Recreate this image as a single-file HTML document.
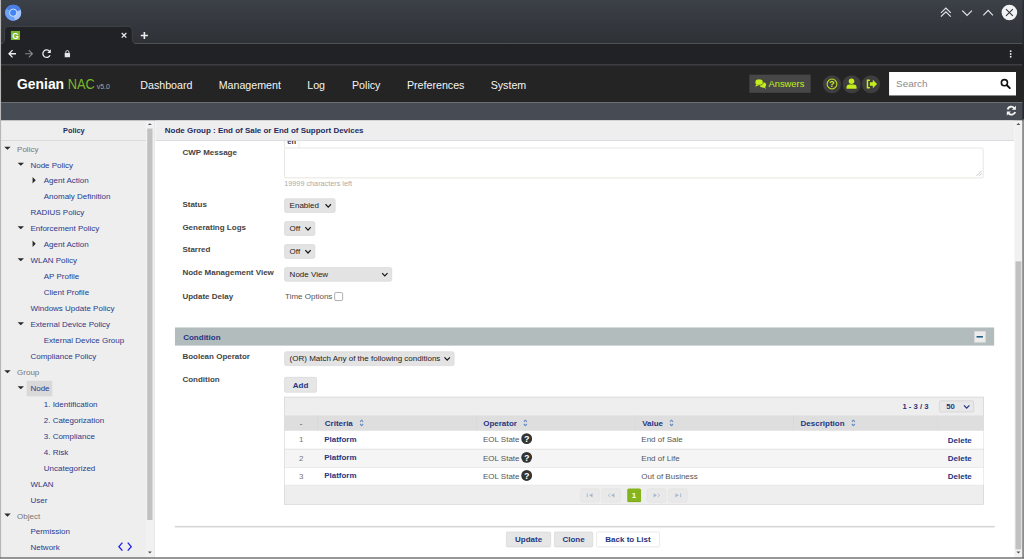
<!DOCTYPE html>
<html>
<head>
<meta charset="utf-8">
<title>Genian NAC</title>
<style>
html,body{margin:0;padding:0;width:1024px;height:559px;overflow:hidden;background:#fff;}
*{box-sizing:border-box;}
#root{position:absolute;left:0;top:0;width:1920px;height:1048px;transform:scale(0.533333);transform-origin:0 0;
  font-family:"Liberation Sans",sans-serif;font-size:15px;color:#444;overflow:hidden;background:#fff;}
.abs{position:absolute;}
/* ---------- browser chrome ---------- */
#titlebar{left:0;top:0;width:1920px;height:81px;background:linear-gradient(#3c4047 0px,#35393f 40px,#2e3136 81px);}
#tab{left:8px;top:50px;width:240px;height:31px;background:#202225;border-radius:9px 9px 0 0;border:1px solid #4a4d52;border-bottom:none;}
#tabline{left:0;top:80px;width:1920px;height:1px;background:#45484d;}
#toolbar{left:0;top:82px;width:1920px;height:39px;background:#202225;}
#toolline{left:0;top:120px;width:1920px;height:2px;background:#3b3e42;}
/* ---------- app header ---------- */
#apphead{left:0;top:122px;width:1920px;height:69.5px;background:#242424;}
#band{left:0;top:191.5px;width:1920px;height:34.5px;background:#474b53;}
.nav{top:145.8px;font-size:20px;color:#f4f4f4;line-height:28px;white-space:nowrap;}
.circ{width:34px;height:34px;border-radius:50%;background:#3e3e3e;top:140.5px;}
/* ---------- sidebar ---------- */
#side{left:2px;top:226px;width:272px;height:820px;background:#eeeeee;overflow:hidden;}
#sidehead{left:0;top:0;width:272px;height:38px;border-bottom:1px solid #c8c8c8;text-align:center;font-weight:bold;color:#1f2c60;line-height:39.5px;font-size:13.8px;padding-left:1px;}
.tr{position:absolute;left:0;height:30px;line-height:30px;font-size:15px;white-space:nowrap;color:#2b3a8a;}
.tr.g{color:#777;}
.ar{position:absolute;width:0;height:0;}
.ard{border-left:6.4px solid transparent;border-right:6.4px solid transparent;border-top:6.5px solid #2a2a2a;margin-left:-0.9px;margin-top:0.3px;}
.arr{border-top:6.2px solid transparent;border-bottom:6.2px solid transparent;border-left:6.8px solid #2a2a2a;margin-top:-0.2px;}
#sscroll{left:274px;top:226px;width:14px;height:820px;background:#f1f1f1;}
#sthumb{left:276px;top:241px;width:10px;height:734px;background:#c1c1c1;}
#split{left:288px;top:226px;width:3px;height:820px;background:#e6e8ec;}
/* ---------- main ---------- */
#main{left:291px;top:226px;width:1611px;height:820px;background:#fff;overflow:hidden;}
#mainhead{left:0;top:0;width:1611px;height:37.6px;background:#eeeeee;border-bottom:1px solid #c5cad2;font-weight:bold;color:#1f2c60;line-height:38px;padding-left:18px;font-size:14.95px;white-space:nowrap;}
#mscroll{left:1902px;top:226px;width:15px;height:820px;background:#f1f1f1;}
#mthumb{left:1904px;top:490px;width:11px;height:540px;background:#c1c1c1;}
.lbl{position:absolute;left:51px;font-weight:bold;font-size:15px;color:#444;line-height:20px;white-space:nowrap;}
.sel{position:absolute;left:242px;height:27px;background:#e3e3e3;border:1px solid #d2d2d2;border-radius:4px;font-size:15px;color:#222;line-height:24.5px;padding-left:9px;white-space:nowrap;}
.sel svg{position:absolute;right:6px;top:7.5px;}
.btn{position:absolute;height:29px;background:#e6e6e6;border:1px solid #cfcfcf;border-radius:3px;font-weight:bold;font-size:15px;color:#233683;line-height:27px;text-align:center;white-space:nowrap;}
/* table */
#tbl{left:242px;top:518.5px;width:1312px;height:202.5px;background:#eeeeee;border:1px solid #cccccc;}
.th{position:absolute;top:34px;height:29.5px;background:#dedede;border-right:1px solid #cfcfcf;font-weight:bold;color:#233683;font-size:15px;line-height:28px;padding-left:13px;white-space:nowrap;}
.row{position:absolute;left:0;width:1310px;height:34px;border-top:1px solid #dcdcdc;font-size:15px;line-height:33px;}
.row span{position:absolute;white-space:nowrap;top:-1px;}
.row span.dl{top:0;}
.b{font-weight:bold;color:#233683;}
.pg{position:absolute;top:171.3px;height:26px;width:36px;background:#e9e9e9;border:1px solid #e0e0e0;border-radius:4px;}
/* window borders */
#bl{left:0;top:0px;width:2px;height:1048px;background:linear-gradient(90deg,#cfcfcf,#9a9a9a);}
#br{left:1917px;top:224px;width:3px;height:824px;background:linear-gradient(90deg,#5f5f5f,#a0a0a0);}
#bb{left:0;top:1045px;width:1920px;height:3px;background:linear-gradient(#5f5f5f,#a0a0a0);}
</style>
</head>
<body>
<div id="root">

<!-- ================= BROWSER CHROME ================= -->
<div id="titlebar" class="abs"></div>
<div id="toolbar" class="abs"></div>
<div id="toolline" class="abs"></div>
<svg class="abs" style="left:0;top:40px" width="1920" height="50" viewBox="0 40 1920 50"><path d="M-4 81.6 L1 81.6 Q8.5 81.6 8.5 73.5 L8.5 58 Q8.5 49.6 17 49.6 L239.5 49.6 Q248 49.6 248 58 L248 73.5 Q248 81.6 255.5 81.6 L1924 81.6 L1924 96 L-4 96 L-4 81.6 Z" fill="#202225" stroke="#484b50" stroke-width="1.3"/></svg>
<svg class="abs" style="left:0;top:0" width="1920" height="122" viewBox="0 0 1920 122">
<!-- chromium logo -->
<g transform="translate(24.8 23.8)">
<circle r="15" fill="#6ea2f6"/>
<path d="M0 0 L-13 -7.5 A15 15 0 0 1 14.1 -5.1 Z" fill="#4a7ee6"/>
<path d="M0 0 L14.1 -5.1 A15 15 0 0 1 2.6 14.8 Z" fill="#a9c7fb"/>
<path d="M0 0 L2.6 14.8 A15 15 0 0 1 -13 -7.5 Z" fill="#6ea2f6"/>
<circle r="6.9" fill="#4086f4" stroke="#eef4ff" stroke-width="1.5"/>
</g>
<!-- window buttons -->
<g fill="none" stroke="#e4e6e8" stroke-width="2.1" stroke-linecap="square">
<path d="M1765 23.5 L1773.5 15 L1782 23.5"/>
<path d="M1765 30.5 L1773.5 22 L1782 30.5"/>
<path d="M1805 20.5 L1813.3 29 L1821.6 20.5"/>
<path d="M1844.5 28 L1852.8 19.5 L1861 28"/>
</g>
<circle cx="1892.6" cy="23.4" r="14.6" fill="#f1f2f3"/>
<path d="M1886.2 17 L1899 29.8 M1899 17 L1886.2 29.8" stroke="#33363b" stroke-width="2.1" fill="none"/>
<!-- favicon -->
<rect x="20.5" y="58" width="17" height="17" fill="#78b82c"/>
<text x="29" y="72.3" font-family="Liberation Sans, sans-serif" font-weight="bold" font-size="15.5" fill="#fff" text-anchor="middle">G</text>
<!-- tab close, plus -->
<path d="M228.3 61.9 L236.9 70.5 M236.9 61.9 L228.3 70.5" stroke="#e8eaed" stroke-width="2.5" fill="none"/>
<path d="M264 66.5 H277.4 M270.7 59.8 V73.2" stroke="#eceef0" stroke-width="3" fill="none"/>
<!-- back -->
<path d="M30 100.8 H17.5 M23.5 94 L16.8 100.8 L23.5 107.6" stroke="#eceef0" stroke-width="2.4" fill="none"/>
<!-- forward -->
<path d="M47 100.8 H60 M54 94 L60.8 100.8 L54 107.6" stroke="#84878b" stroke-width="2.2" fill="none"/>
<!-- reload -->
<path d="M93 96.5 A7 7 0 1 0 93.8 103.5" stroke="#eceef0" stroke-width="2.4" fill="none"/>
<path d="M95.3 92.5 V99.2 H88.6 Z" fill="#eceef0"/>
<!-- lock -->
<rect x="121.3" y="99.4" width="10" height="7.8" rx="1" fill="#e4e6e8"/>
<path d="M123.4 99.6 V97.6 A2.9 2.9 0 0 1 129.2 97.6 V99.6" stroke="#e4e6e8" stroke-width="1.7" fill="none"/>
<!-- menu -->
<circle cx="1895" cy="96" r="1.7" fill="#eceef0"/><circle cx="1895" cy="101.2" r="1.7" fill="#eceef0"/><circle cx="1895" cy="106.4" r="1.7" fill="#eceef0"/>
</svg>

<!-- ================= APP HEADER ================= -->
<div id="apphead" class="abs"></div>
<div id="band" class="abs"></div>
<div class="abs" style="left:32px;top:137px;font-size:26px;font-weight:bold;color:#fff;line-height:40px;white-space:nowrap;">Genian</div>
<div class="abs" style="left:127px;top:137px;font-size:27px;color:#7ab82a;line-height:40px;white-space:nowrap;transform:scaleX(0.89);transform-origin:0 0;">NAC</div>
<div class="abs" style="left:181.5px;top:147px;font-size:13px;color:#a8a8a8;line-height:30px;white-space:nowrap;">v5.0</div>
<div class="abs nav" style="left:263px;">Dashboard</div>
<div class="abs nav" style="left:410px;">Management</div>
<div class="abs nav" style="left:576px;">Log</div>
<div class="abs nav" style="left:660px;">Policy</div>
<div class="abs nav" style="left:763px;">Preferences</div>
<div class="abs nav" style="left:920px;">System</div>
<div class="abs" style="left:1405px;top:140px;width:115px;height:34px;background:#474747;"></div>
<div class="abs" style="left:1441px;top:140px;font-size:17.5px;color:#c4ef1c;line-height:34px;white-space:nowrap;">Answers</div>
<div class="abs circ" style="left:1543px;"></div>
<div class="abs circ" style="left:1579.6px;"></div>
<div class="abs circ" style="left:1616.3px;"></div>
<div class="abs" style="left:1667px;top:135px;width:238px;height:44px;background:#fff;"></div>
<div class="abs" style="left:1680px;top:136px;font-size:18.7px;color:#8a8a8a;line-height:44px;">Search</div>
<svg class="abs" style="left:1400px;top:122px" width="520" height="102" viewBox="1400 122 520 102">
<!-- comments icon -->
<g fill="#c4ef1c">
<ellipse cx="1430.3" cy="159" rx="6.2" ry="4.9"/>
<path d="M1433.5 162 L1436.8 166.2 L1430 163.6 Z"/>
<ellipse cx="1423.3" cy="154" rx="7.6" ry="5.9" stroke="#474747" stroke-width="1.3"/>
<path d="M1418.2 157.4 L1416.2 162.6 L1423 159.4 Z"/>
</g>
<!-- help -->
<circle cx="1560" cy="157.5" r="9.2" fill="none" stroke="#c4ef1c" stroke-width="1.9"/>
<text x="1560" y="163.4" font-family="Liberation Sans, sans-serif" font-weight="bold" font-size="16.5" fill="#c4ef1c" text-anchor="middle">?</text>
<!-- user -->
<circle cx="1596.6" cy="152.3" r="5.2" fill="#c4ef1c"/>
<path d="M1587.3 166.5 V163.5 A5 5 0 0 1 1592.3 158.5 H1601 A5 5 0 0 1 1606 163.5 V166.5 Z" fill="#c4ef1c"/>
<!-- sign out -->
<path d="M1631 150.5 H1626.5 V164.5 H1631" fill="none" stroke="#c4ef1c" stroke-width="2.8"/>
<path d="M1631 154.3 H1636.5 V149.5 L1644.5 157.5 L1636.5 165.5 V160.7 H1631 Z" fill="#c4ef1c"/>
<!-- magnifier -->
<circle cx="1883.3" cy="155" r="5.7" fill="none" stroke="#111" stroke-width="3"/>
<path d="M1888 159.8 L1893.4 165.2" stroke="#111" stroke-width="3.6" stroke-linecap="round"/>
<!-- refresh -->
<g fill="none" stroke="#f6f6f6" stroke-width="3.5">
<path d="M1889.2 205.2 A7.2 7.2 0 0 1 1901.6 202.6"/>
<path d="M1903.4 209.8 A7.2 7.2 0 0 1 1891 212.4"/>
</g>
<path d="M1904.8 198.4 V206 H1897.2 Z" fill="#f6f6f6"/>
<path d="M1887.8 216.6 V209 H1895.4 Z" fill="#f6f6f6"/>
</svg>

<!-- ================= SIDEBAR ================= -->
<div id="side" class="abs">
<div id="sidehead" class="abs">Policy</div>
<div class="tr g" style="left:30px;top:38.6px;">Policy</div>
<div class="ar ard" style="left:6.5px;top:48.60px;"></div>
<div class="tr" style="left:55px;top:68.51px;">Node Policy</div>
<div class="ar ard" style="left:31.5px;top:78.51px;"></div>
<div class="tr" style="left:80px;top:98.42px;">Agent Action</div>
<div class="ar arr" style="left:58.5px;top:105.92px;"></div>
<div class="tr" style="left:80px;top:128.33px;">Anomaly Definition</div>
<div class="tr" style="left:55px;top:158.24px;">RADIUS Policy</div>
<div class="tr" style="left:55px;top:188.15px;">Enforcement Policy</div>
<div class="ar ard" style="left:31.5px;top:198.15px;"></div>
<div class="tr" style="left:80px;top:218.06px;">Agent Action</div>
<div class="ar arr" style="left:58.5px;top:225.56px;"></div>
<div class="tr" style="left:55px;top:247.97px;">WLAN Policy</div>
<div class="ar ard" style="left:31.5px;top:257.97px;"></div>
<div class="tr" style="left:80px;top:277.88px;">AP Profile</div>
<div class="tr" style="left:80px;top:307.79px;">Client Profile</div>
<div class="tr" style="left:55px;top:337.7px;">Windows Update Policy</div>
<div class="tr" style="left:55px;top:367.61px;">External Device Policy</div>
<div class="ar ard" style="left:31.5px;top:377.61px;"></div>
<div class="tr" style="left:80px;top:397.52px;">External Device Group</div>
<div class="tr" style="left:55px;top:427.43px;">Compliance Policy</div>
<div class="tr g" style="left:30px;top:457.34px;">Group</div>
<div class="ar ard" style="left:6.5px;top:467.34px;"></div>
<div class="abs" style="left:48px;top:487.55px;width:48px;height:29px;background:#d9d9d9;"></div>
<div class="tr" style="left:55px;top:487.25px;">Node</div>
<div class="ar ard" style="left:31.5px;top:497.25px;"></div>
<div class="tr" style="left:80px;top:517.16px;">1. Identification</div>
<div class="tr" style="left:80px;top:547.07px;">2. Categorization</div>
<div class="tr" style="left:80px;top:576.98px;">3. Compliance</div>
<div class="tr" style="left:80px;top:606.89px;">4. Risk</div>
<div class="tr" style="left:80px;top:636.8px;">Uncategorized</div>
<div class="tr" style="left:55px;top:666.71px;">WLAN</div>
<div class="tr" style="left:55px;top:696.62px;">User</div>
<div class="tr g" style="left:30px;top:726.53px;">Object</div>
<div class="ar ard" style="left:6.5px;top:736.53px;"></div>
<div class="tr" style="left:55px;top:756.44px;">Permission</div>
<div class="tr" style="left:55px;top:786.35px;">Network</div>
<svg class="abs" style="left:218px;top:789.35px" width="32" height="20" viewBox="0 0 32 20"><path d="M9.5 2.5 L3 10 L9.5 17.5 M19.5 2.5 L26 10 L19.5 17.5" fill="none" stroke="#2222ee" stroke-width="2.6"/></svg>
</div>
<div id="sscroll" class="abs"></div>
<div id="sthumb" class="abs"></div>
<div id="split" class="abs"></div>

<!-- ================= MAIN ================= -->
<div id="main" class="abs">
<div id="form" class="abs" style="left:0;top:-1px;width:1611px;height:822px;">
<div class="abs" style="left:242px;top:26px;width:28px;height:26px;border:1px solid #d9d5cc;border-bottom:none;background:#fff;font-weight:bold;font-size:14px;color:#333;text-align:center;line-height:27.5px;">en</div>
<div class="abs" style="left:242px;top:51.5px;width:1311px;height:57px;border:1px solid #d4d0c8;border-radius:3px;background:#fff;"></div>
<svg class="abs" style="left:1539px;top:94px" width="12" height="12" viewBox="0 0 12 12"><path d="M11 1 L1 11 M11 6 L6 11" stroke="#999" stroke-width="1"/></svg>
<div class="lbl" style="top:50px;">CWP Message</div>
<div class="abs" style="left:242px;top:110px;font-size:13.6px;color:#aaa;line-height:20px;white-space:nowrap;">19999 characters left</div>
<div class="lbl" style="top:148.3px;">Status</div>
<div class="sel" style="top:147px;width:96px;">Enabled<svg width="13" height="10" viewBox="0 0 13 10"><path d="M1.4 2 L6.5 7.4 L11.6 2" fill="none" stroke="#1a1a1a" stroke-width="2.3"/></svg></div>
<div class="lbl" style="top:190.5px;">Generating Logs</div>
<div class="sel" style="top:190.4px;width:58px;">Off<svg width="13" height="10" viewBox="0 0 13 10"><path d="M1.4 2 L6.5 7.4 L11.6 2" fill="none" stroke="#1a1a1a" stroke-width="2.3"/></svg></div>
<div class="lbl" style="top:232.7px;">Starred</div>
<div class="sel" style="top:233.4px;width:58px;">Off<svg width="13" height="10" viewBox="0 0 13 10"><path d="M1.4 2 L6.5 7.4 L11.6 2" fill="none" stroke="#1a1a1a" stroke-width="2.3"/></svg></div>
<div class="lbl" style="top:276px;">Node Management View</div>
<div class="sel" style="top:276.2px;width:202px;">Node View<svg width="13" height="10" viewBox="0 0 13 10"><path d="M1.4 2 L6.5 7.4 L11.6 2" fill="none" stroke="#1a1a1a" stroke-width="2.3"/></svg></div>
<div class="lbl" style="top:320px;">Update Delay</div>
<div class="abs" style="left:243.5px;top:320px;font-size:15px;color:#555;line-height:20px;white-space:nowrap;">Time Options</div>
<div class="abs" style="left:336px;top:323px;width:16px;height:16px;border:1.4px solid #6a6a6a;border-radius:3px;background:#fff;"></div>
<div class="abs" style="left:37px;top:389px;width:1536px;height:33.5px;background:#b3bcbc;"></div>
<div class="abs" style="left:52.5px;top:390.5px;font-weight:bold;font-size:15px;color:#233683;line-height:34px;">Condition</div>
<div class="abs" style="left:1535.5px;top:395.5px;width:21px;height:21px;background:#ececec;border:1px solid #d8d8d8;"></div>
<div class="abs" style="left:1540px;top:404.5px;width:12px;height:3px;background:#1f5f80;"></div>
<div class="lbl" style="top:433.5px;">Boolean Operator</div>
<div class="sel" style="top:434px;width:319px;">(OR) Match Any of the following conditions<svg width="13" height="10" viewBox="0 0 13 10"><path d="M1.4 2 L6.5 7.4 L11.6 2" fill="none" stroke="#1a1a1a" stroke-width="2.3"/></svg></div>
<div class="lbl" style="top:477px;">Condition</div>
<div class="btn" style="left:242px;top:482px;width:61px;">Add</div>
<div id="tbl" class="abs"><div class="abs b" style="left:1158px;top:6.5px;font-size:14.5px;line-height:22px;white-space:nowrap;">1 - 3 / 3</div>
<div class="abs b" style="left:1227px;top:6.5px;width:65px;height:22px;background:#e8e8e8;border:1px solid #c8c8c8;border-radius:3px;font-size:14.5px;line-height:19px;padding-left:12px;">50<svg style="position:absolute;right:6.5px;top:5.5px" width="13" height="10" viewBox="0 0 13 10"><path d="M1.4 2 L6.5 7.4 L11.6 2" fill="none" stroke="#233683" stroke-width="2.3"/></svg></div>
<div class="th" style="left:0px;width:62px;padding-left:0;text-align:center;font-weight:normal;color:#445;">-</div>
<div class="th" style="left:62px;width:298px;">Criteria<svg style="margin-left:12px;vertical-align:-2px" width="8" height="14" viewBox="0 0 8 14"><path d="M1 5 L4 1.8 L7 5 M1 9 L4 12.2 L7 9" fill="none" stroke="#6a8cc4" stroke-width="2.1"/></svg></div>
<div class="th" style="left:360px;width:298.5px;padding-left:12px;">Operator<svg style="margin-left:12px;vertical-align:-2px" width="8" height="14" viewBox="0 0 8 14"><path d="M1 5 L4 1.8 L7 5 M1 9 L4 12.2 L7 9" fill="none" stroke="#6a8cc4" stroke-width="2.1"/></svg></div>
<div class="th" style="left:658.5px;width:296.5px;padding-left:11.5px;">Value<svg style="margin-left:12px;vertical-align:-2px" width="8" height="14" viewBox="0 0 8 14"><path d="M1 5 L4 1.8 L7 5 M1 9 L4 12.2 L7 9" fill="none" stroke="#6a8cc4" stroke-width="2.1"/></svg></div>
<div class="th" style="left:955px;width:268.5px;padding-left:12px;">Description<svg style="margin-left:12px;vertical-align:-2px" width="8" height="14" viewBox="0 0 8 14"><path d="M1 5 L4 1.8 L7 5 M1 9 L4 12.2 L7 9" fill="none" stroke="#6a8cc4" stroke-width="2.1"/></svg></div>
<div class="th" style="left:1223.5px;width:86.5px;border-right:none;"></div>
<div class="row" style="top:62.5px;background:#fff;"><span style="left:0;width:62px;text-align:center;color:#777;">1</span><span class="b" style="left:74px;font-size:14.9px;">Platform</span><span style="left:371.5px;color:#555;">EOL State</span><svg style="position:absolute;left:443px;top:4.2px" width="21" height="21" viewBox="-0.5 -0.5 21 21"><circle cx="10" cy="10" r="10.2" fill="#333"/><text x="10" y="16" font-family="Liberation Sans, sans-serif" font-weight="bold" font-size="17" fill="#fff" text-anchor="middle">?</text></svg><span style="left:668.5px;color:#555;">End of Sale</span><span class="b dl" style="left:1243px;">Delete</span></div>
<div class="row" style="top:97.3px;background:#f5f5f5;"><span style="left:0;width:62px;text-align:center;color:#777;">2</span><span class="b" style="left:74px;font-size:14.9px;">Platform</span><span style="left:371.5px;color:#555;">EOL State</span><svg style="position:absolute;left:443px;top:4.2px" width="21" height="21" viewBox="-0.5 -0.5 21 21"><circle cx="10" cy="10" r="10.2" fill="#333"/><text x="10" y="16" font-family="Liberation Sans, sans-serif" font-weight="bold" font-size="17" fill="#fff" text-anchor="middle">?</text></svg><span style="left:668.5px;color:#555;">End of Life</span><span class="b dl" style="left:1243px;">Delete</span></div>
<div class="row" style="top:131.3px;background:#fff;"><span style="left:0;width:62px;text-align:center;color:#777;">3</span><span class="b" style="left:74px;font-size:14.9px;">Platform</span><span style="left:371.5px;color:#555;">EOL State</span><svg style="position:absolute;left:443px;top:4.2px" width="21" height="21" viewBox="-0.5 -0.5 21 21"><circle cx="10" cy="10" r="10.2" fill="#333"/><text x="10" y="16" font-family="Liberation Sans, sans-serif" font-weight="bold" font-size="17" fill="#fff" text-anchor="middle">?</text></svg><span style="left:668.5px;color:#555;">Out of Business</span><span class="b dl" style="left:1243px;">Delete</span></div>
<div class="abs" style="left:0;top:164.5px;width:1310px;height:1px;background:#dcdcdc;"></div>
<div class="pg" style="left:554px;"><svg width="36" height="25" viewBox="0 0 36 25" style="position:absolute;left:-1px;top:-1px"><rect x="12.3" y="9.3" width="1.8" height="7" fill="#a4b8cd"/><path d="M23 9 V16.6 L16.8 12.8 Z" fill="#a4b8cd"/></svg></div>
<div class="pg" style="left:593.8px;"><svg width="36" height="25" viewBox="0 0 36 25" style="position:absolute;left:-1px;top:-1px"><path d="M16.2 9.6 L12.6 12.8 L16.2 16" fill="none" stroke="#a4b8cd" stroke-width="1.5"/><path d="M24 9 V16.6 L17.8 12.8 Z" fill="#a4b8cd"/></svg></div>
<div class="pg" style="left:679px;"><svg width="36" height="25" viewBox="0 0 36 25" style="position:absolute;left:-1px;top:-1px"><path d="M12.4 9 V16.6 L18.6 12.8 Z" fill="#a4b8cd"/><path d="M20.2 9.6 L23.8 12.8 L20.2 16" fill="none" stroke="#a4b8cd" stroke-width="1.5"/></svg></div>
<div class="pg" style="left:719.4px;"><svg width="36" height="25" viewBox="0 0 36 25" style="position:absolute;left:-1px;top:-1px"><path d="M13.4 9 V16.6 L19.6 12.8 Z" fill="#a4b8cd"/><rect x="22.3" y="9.3" width="1.8" height="7" fill="#a4b8cd"/></svg></div>
<div class="abs" style="left:641.5px;top:171.3px;width:26px;height:26px;background:#86b41c;border-bottom:2px solid #74a012;border-radius:3px;color:#fff;font-weight:bold;font-size:15px;text-align:center;line-height:26px;">1</div></div>
<div class="abs" style="left:37px;top:761px;width:1537px;height:3px;background:#d6d6d6;"></div>
<div class="btn" style="left:658px;top:771.5px;width:84px;">Update</div>
<div class="btn" style="left:748px;top:771.5px;width:73px;">Clone</div>
<div class="btn" style="left:827px;top:771.5px;width:119px;background:#fff;border-color:#d8d8d8;">Back to List</div>
</div>
<div id="mainhead" class="abs">Node Group : End of Sale or End of Support Devices</div>
</div>
<div id="mscroll" class="abs"></div>
<div id="mthumb" class="abs"></div>

<svg class="abs" style="left:0;top:226px" width="1920" height="820" viewBox="0 226 1920 820">
<g fill="#505050">
<path d="M277.3 234.6 L281 230.9 L284.7 234.6 Z"/>
<path d="M277.3 1034.2 L281 1037.9 L284.7 1034.2 Z"/>
<path d="M1905.8 234.3 L1909.5 230.4 L1913.2 234.3 Z"/>
<path d="M1905.8 1034.2 L1909.5 1038 L1913.2 1034.2 Z"/>
</g></svg>
<div class="abs" style="left:1917px;top:0;width:3px;height:226px;background:linear-gradient(#2c2f34,#26282c 80px,#1c1d20 122px,#222 130px,#26282b 226px);"></div>
<div id="bl" class="abs"></div>
<div id="br" class="abs"></div>
<div id="bb" class="abs"></div>
</div>
</body>
</html>
